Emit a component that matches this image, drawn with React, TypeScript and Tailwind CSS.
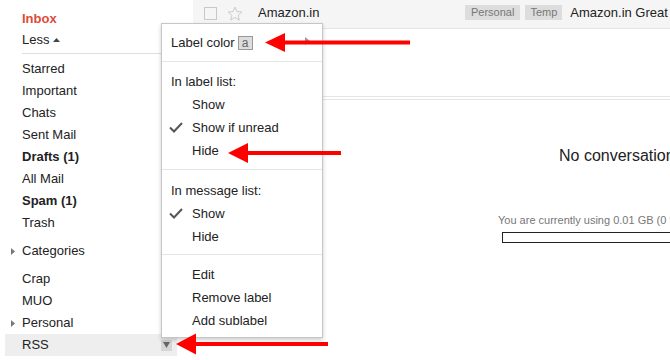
import React from "react";

const FONT = { fontFamily: '"Liberation Sans", Arial, sans-serif' };

function Tri({ dir, className }: { dir: "right" | "up" | "down"; className?: string }) {
  if (dir === "right")
    return (
      <svg width="4" height="7" viewBox="0 0 4 7" className={className}>
        <polygon points="0,0 4,3.5 0,7" fill="#777" />
      </svg>
    );
  if (dir === "up")
    return (
      <svg width="7" height="4" viewBox="0 0 7 4" className={className}>
        <polygon points="0,4 3.5,0 7,4" fill="#444" />
      </svg>
    );
  return (
    <svg width="7" height="6" viewBox="0 0 7 6" className={className}>
      <polygon points="0,0 7,0 3.5,6" fill="#666" />
    </svg>
  );
}

function SideRow({
  label,
  bold,
  arrow,
  selected,
  className = "",
}: {
  label: string;
  bold?: boolean;
  arrow?: boolean;
  selected?: boolean;
  className?: string;
}) {
  return (
    <div
      className={`ml-[5px] w-[172px] h-[22px] pl-[6px] pr-[5px] flex items-center text-[13px] text-[#222] ${
        selected ? "bg-[#eeeeee]" : ""
      } ${bold ? "font-bold" : ""} ${className}`}
    >
      <div className="w-[4px] flex items-center">{arrow ? <Tri dir="right" /> : null}</div>
      <span className="ml-[7px] flex-1 leading-[22px]">{label}</span>
      {selected ? (
        <div className="w-[11px] h-[11px] bg-[#d6d6d6] flex items-center justify-center">
          <Tri dir="down" />
        </div>
      ) : null}
    </div>
  );
}

function Check() {
  return (
    <svg width="14" height="11" viewBox="0 0 14 11" className="absolute left-[7px] top-[6px]">
      <polyline points="1,5.5 5,9.5 13,1" fill="none" stroke="#555" strokeWidth="2" />
    </svg>
  );
}

function MenuItem({ label, checked }: { label: string; checked?: boolean }) {
  return (
    <div className="relative h-[23px] leading-[23px] pl-[30px] text-[13px] text-[#222] whitespace-nowrap">
      {checked ? <Check /> : null}
      {label}
    </div>
  );
}

function MenuHeader({ label }: { label: string }) {
  return (
    <div className="h-[22px] leading-[22px] pl-[9px] text-[13px] text-[#222] whitespace-nowrap">{label}</div>
  );
}

function Divider() {
  return <div className="h-[1px] bg-[#e5e5e5]" />;
}

export default function App() {
  return (
    <div className="relative w-[670px] h-[360px] overflow-hidden bg-white" style={FONT}>
      <div className="flex h-full">
        {/* Sidebar */}
        <div className="w-[193px] shrink-0 pt-[8px]">
          <div className="h-[21px] leading-[21px] pl-[22px] text-[13px] font-bold text-[#dd4b39]">Inbox</div>
          <div className="h-[22px] pl-[22px] flex items-center text-[13px] text-[#222]">
            <span className="leading-[22px]">Less</span>
            <Tri dir="up" className="ml-[4px]" />
          </div>
          <div className="mt-[2px] ml-[22px] h-[1px] bg-[#dddddd]" />
          <div className="mt-[4px]">
            <SideRow label="Starred" />
            <SideRow label="Important" />
            <SideRow label="Chats" />
            <SideRow label="Sent Mail" />
            <SideRow label="Drafts (1)" bold />
            <SideRow label="All Mail" />
            <SideRow label="Spam (1)" bold />
            <SideRow label="Trash" />
          </div>
          <SideRow label="Categories" arrow className="mt-[6px]" />
          <div className="mt-[6px]">
            <SideRow label="Crap" />
            <SideRow label="MUO" />
            <SideRow label="Personal" arrow />
            <SideRow label="RSS" selected />
          </div>
        </div>

        {/* Main */}
        <div className="flex-1 min-w-0 overflow-hidden">
          <div className="h-[28px] bg-[#f5f5f5] flex items-center pb-[2px] pl-[11px] whitespace-nowrap">
            <div className="w-[13px] h-[13px] border border-[#c8c8c8] shrink-0" />
            <svg width="16" height="15" viewBox="0 0 24 23" className="ml-[10px] shrink-0">
              <polygon
                points="12,1.5 15,8.6 22.6,9.2 16.8,14.2 18.6,21.6 12,17.6 5.4,21.6 7.2,14.2 1.4,9.2 9,8.6"
                fill="none"
                stroke="#c8c8c8"
                strokeWidth="1.4"
                strokeLinejoin="round"
              />
            </svg>
            <span className="ml-[15px] w-[207px] shrink-0 text-[13px] text-[#222]">Amazon.in</span>
            <span className="h-[15px] leading-[15px] px-[6px] bg-[#dddddd] text-[11px] text-[#777] shrink-0 -mt-[2px]">
              Personal
            </span>
            <span className="ml-[5px] h-[15px] leading-[15px] px-[5px] bg-[#dddddd] text-[11px] text-[#777] shrink-0 -mt-[2px]">
              Temp
            </span>
            <span className="ml-[8px] text-[13px] text-[#222]">Amazon.in Great</span>
          </div>
          <div className="h-[1px] bg-[#e5e5e5]" />
          <div className="h-[67px]" />
          <div className="h-[1px] bg-[#e5e5e5]" />
          <div className="h-[2px]" />
          <div className="h-[1px] bg-[#e5e5e5]" />
          <div className="mt-[46px] pl-[366px] h-[20px] leading-[20px] text-[16px] text-[#222] whitespace-nowrap">
            No conversations in this label
          </div>
          <div className="mt-[47px] pl-[305px] h-[14px] leading-[14px] text-[11px] text-[#777] whitespace-nowrap">
            You are currently using 0.01 GB (0 %) of your 15 GB
          </div>
          <div className="mt-[5px] ml-[309px] w-[300px] h-[11px] border border-[#222]" />
        </div>
      </div>

      {/* Label dropdown menu */}
      <div className="absolute left-[161px] top-[23px] w-[162px] bg-white border border-[#c6c6c6] shadow-[0_2px_4px_rgba(0,0,0,0.2)]">
        <div className="pt-[7px] pb-[7px]">
          <div className="relative h-[23px] pl-[9px] flex items-center text-[13px] text-[#222] whitespace-nowrap">
            <span className="leading-[23px]">Label color</span>
            <span className="ml-[3px] w-[15px] h-[14px] bg-[#dddddd] border border-[#999] flex items-center justify-center text-[12px] leading-[12px] text-[#666]">
              a
            </span>
            <svg width="5" height="8" viewBox="0 0 5 8" className="absolute left-[143px] top-[6px]">
              <polygon points="0,0 5,4 0,8" fill="#999" />
            </svg>
          </div>
        </div>
        <Divider />
        <div className="pt-[9px] pb-[7px]">
          <MenuHeader label="In label list:" />
          <MenuItem label="Show" />
          <MenuItem label="Show if unread" checked />
          <MenuItem label="Hide" />
        </div>
        <Divider />
        <div className="pt-[10px] pb-[6px]">
          <MenuHeader label="In message list:" />
          <MenuItem label="Show" checked />
          <MenuItem label="Hide" />
        </div>
        <Divider />
        <div className="pt-[8px] pb-[5px]">
          <MenuItem label="Edit" />
          <MenuItem label="Remove label" />
          <MenuItem label="Add sublabel" />
        </div>
      </div>

      {/* Red annotation arrows */}
      <svg
        className="absolute left-0 top-0 pointer-events-none"
        width="670"
        height="360"
        viewBox="0 0 670 360"
      >
        <g fill="#ff0000">
          <rect x="282" y="40.5" width="128" height="4" />
          <polygon points="265,42.5 285,33 285,52" />
          <rect x="245" y="151" width="96" height="4" />
          <polygon points="228,153 248,143 248,163" />
          <rect x="193" y="342" width="135" height="4" />
          <polygon points="176,344 196,333.5 196,354.5" />
        </g>
      </svg>
    </div>
  );
}
